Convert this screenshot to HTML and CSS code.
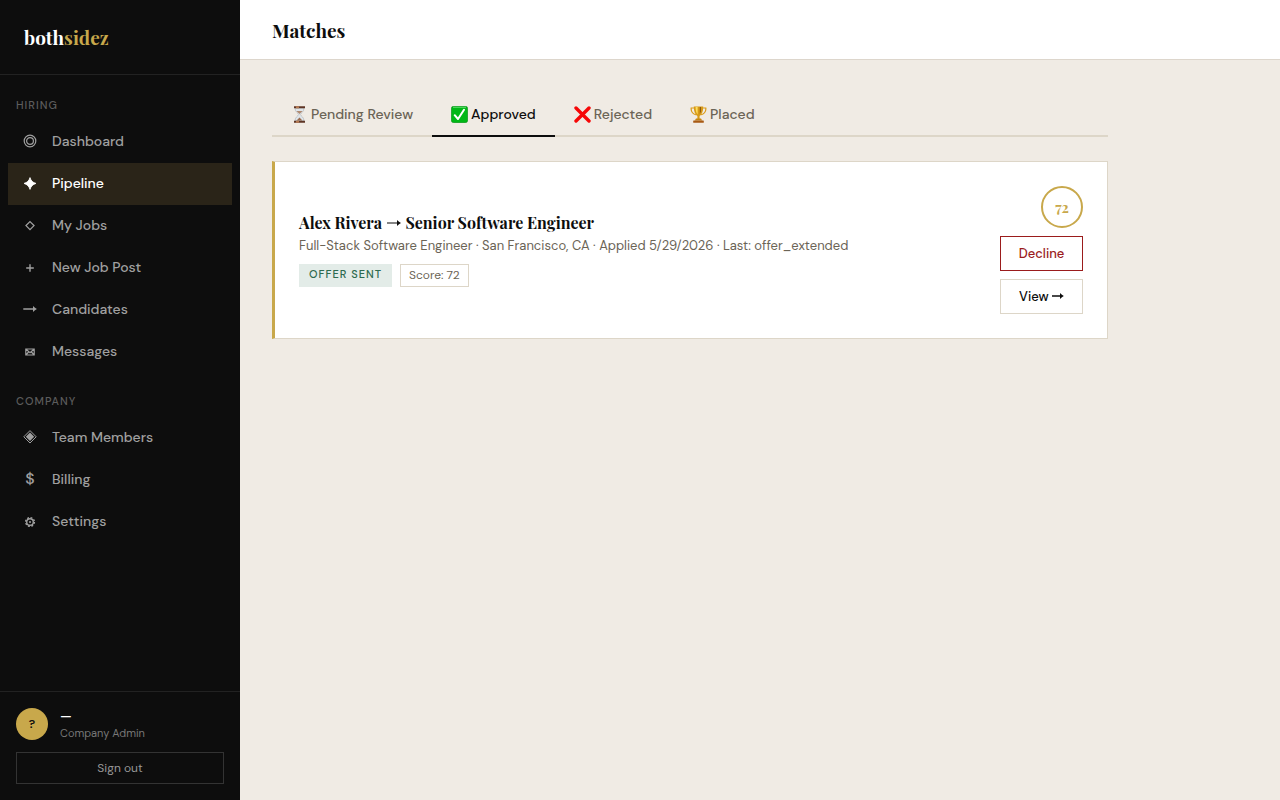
FILE: index.html
```html
<!DOCTYPE html>
<html lang="en">
<head>
    <meta charset="UTF-8" />
    <meta name="viewport" content="width=device-width, initial-scale=1.0" />
    <title>Matches - bothsidez</title>
    <link rel="stylesheet" href="styles.css">
</head>
<body>

<aside class="sidebar">
    <a href="#" class="logo">both<span>sidez</span></a>

    <nav class="nav">
        <div class="nav-section">
            <div class="nav-label">Hiring</div>
            <a href="#" class="nav-item">
                <svg class="nav-icon" viewBox="0 0 16 16" fill="none" stroke="currentColor" stroke-width="1.2"><circle cx="8" cy="8" r="5.8"/><circle cx="8" cy="8" r="3.4"/></svg>
                Dashboard
            </a>
            <a href="#" class="nav-item active">
                <svg class="nav-icon" viewBox="0 0 16 16" fill="currentColor"><path d="M8 2.6C9 5.8 10.8 7.6 14 8.4C10.8 9.4 9 11.2 8 14.4C7 11.2 5.2 9.4 2 8.4C5.2 7.6 7 5.8 8 2.6Z" stroke="currentColor" stroke-width=".8"/></svg>
                Pipeline
            </a>
            <a href="#" class="nav-item">
                <svg class="nav-icon" viewBox="0 0 16 16" fill="none" stroke="currentColor" stroke-width="1.3"><path d="M8 4.6L12 8.6L8 12.6L4 8.6Z"/></svg>
                My Jobs
            </a>
            <a href="#" class="nav-item">
                <svg class="nav-icon" viewBox="0 0 16 16" fill="none" stroke="currentColor" stroke-width="1.4"><path d="M8 5.2V12.8M4.2 9H11.8"/></svg>
                New Job Post
            </a>
            <a href="#" class="nav-item">
                <svg class="nav-icon" viewBox="0 0 16 16" fill="currentColor"><path d="M1.3 7.2H11V5Q13 7 14.9 8Q13 9 11 11V8.8H1.3Z"/></svg>
                Candidates
            </a>
            <a href="#" class="nav-item">
                <svg class="nav-icon" viewBox="0 0 16 16" fill="none" stroke="currentColor" stroke-width="1.2"><path d="M3.8 6H12.2V12H3.8ZM3.8 6L8 9.6L12.2 6M3.8 12L6.6 9M12.2 12L9.4 9"/></svg>
                Messages
            </a>
        </div>

        <div class="nav-section">
            <div class="nav-label">Company</div>
            <a href="#" class="nav-item">
                <svg class="nav-icon" viewBox="0 0 16 16" fill="currentColor"><path d="M8 1.6L14.2 7.8L8 14L1.8 7.8Z" fill="none" stroke="currentColor" stroke-width="1"/><path d="M8 3.6L12.2 7.8L8 12L3.8 7.8Z"/></svg>
                Team Members
            </a>
            <a href="#" class="nav-item">
                <span class="nav-icon">$</span>
                Billing
            </a>
            <a href="#" class="nav-item">
                <svg class="nav-icon" viewBox="0 0 16 16" fill="none" stroke="currentColor"><circle cx="8" cy="9" r="3.3" stroke-width="1.4"/><circle cx="8" cy="9" r="1" fill="currentColor" stroke="none"/><circle cx="8" cy="9" r="4.4" stroke-width="1.4" stroke-dasharray="1.9 1.556"/></svg>
                Settings
            </a>
        </div>
    </nav>

    <div class="sidebar-footer">
        <div class="user">
            <div class="avatar">?</div>
            <div>
                <div class="user-name">—</div>
                <div class="user-role">Company Admin</div>
            </div>
        </div>
        <button type="button" class="signout">Sign out</button>
    </div>
</aside>

<main class="main">
    <header class="topbar">
        <h1>Matches</h1>
    </header>

    <div class="content">
        <div class="tabs">
            <button type="button" class="tab">
                <svg class="emoji" viewBox="0 0 17 17">
                    <path d="M4 2H13C13 6 10 6.8 9.3 8.5C10 10.2 13 11 13 15H4C4 11 7 10.2 7.7 8.5C7 6.8 4 6 4 2Z" fill="#dfe4e8" stroke="#aab0b5" stroke-width=".6"/>
                    <path d="M5.6 5H11.4C11 6.2 9.3 6.8 8.5 8C7.7 6.8 6 6.2 5.6 5Z" fill="#b08a70"/>
                    <path d="M8.5 11.5L11.4 14.6H5.6Z" fill="#9a6a4c"/>
                    <path d="M3 .2H14V2.3H3ZM3 14.7H14V16.8H3Z" fill="#5e3524"/>
                    <path d="M5 .2H8V2.3H5ZM5 14.7H8V16.8H5Z" fill="#b77b52"/>
                </svg>
                Pending Review
            </button>
            <button type="button" class="tab active">
                <svg class="emoji" viewBox="0 0 17 17">
                    <rect x=".3" y=".3" width="16.4" height="16.4" rx="2.4" fill="#00b816" stroke="#078a18" stroke-width=".6"/>
                    <path d="M2 1.3H15" stroke="#6be077" stroke-width=".9"/>
                    <path d="M3.7 9.2L7 13L13 3.8" fill="none" stroke="#fff" stroke-width="2" stroke-linecap="round" stroke-linejoin="round"/>
                </svg>
                Approved
            </button>
            <button type="button" class="tab">
                <svg class="emoji" viewBox="0 0 17 17"><path d="M2 2L15 15M15 2L2 15" stroke="#f60707" stroke-width="3.4" stroke-linecap="round"/></svg>
                Rejected
            </button>
            <button type="button" class="tab">
                <svg class="emoji" viewBox="0 0 17 17">
                    <path d="M4.5 2H1.2C.8 5.5 3 8 6.5 9M12.5 2H15.8C16.2 5.5 14 8 10.5 9" fill="none" stroke="#d99a16" stroke-width="1.2"/>
                    <path d="M3.8 .5H13.2C13.2 5.5 12 8.5 9.6 10V13H7.4V10C5 8.5 3.8 5.5 3.8 .5Z" fill="#d79a18"/>
                    <path d="M5.6 1H7.6V8.5C6.2 7 5.6 4 5.6 1Z" fill="#ffdf5c"/>
                    <path d="M9.8 1H11V5.5L9.8 8Z" fill="#8f5a0c"/>
                    <path d="M6 12.6H11L12.2 14.6H4.8Z" fill="#c88710"/>
                    <rect x="3.2" y="14.4" width="10.6" height="2.4" rx=".5" fill="#a85a14"/>
                </svg>
                Placed
            </button>
        </div>

        <div class="card">
            <div class="info">
                <h2 class="card-title">
                    Alex Rivera
                    <svg class="arrow" viewBox="0 0 16 12" role="img" aria-label="to"><path d="M1 5.4H11V3Q13 5 15 6Q13 7 11 9V6.6H1Z" fill="currentColor"/></svg>
                    Senior Software Engineer
                </h2>
                <div class="meta">Full-Stack Software Engineer · San Francisco, CA · Applied 5/29/2026 · Last: offer_extended</div>
                <div class="badges">
                    <span class="badge">Offer Sent</span>
                    <span class="tag">Score: 72</span>
                </div>
            </div>
            <div class="actions">
                <div class="score">72</div>
                <button type="button" class="btn btn-danger">Decline</button>
                <button type="button" class="btn">View <svg class="arrow-sm" viewBox="0 0 12 10"><path d="M0 4.3H8V2Q10 4 11.8 5Q10 6 8 8V5.7H0Z" fill="currentColor"/></svg></button>
            </div>
        </div>
    </div>
</main>

</body>
</html>
```

FILE: styles.css
```css
* {
    box-sizing: border-box;
    margin: 0;
    padding: 0;
}
body {
    display: flex;
    min-height: 100vh;
    font-family: "DM Sans", Inter, "Open Sans", sans-serif;
    font-size: 14px;
    color: #0d0d0d;
    background: #f0ebe4;
}
button {
    font-family: inherit;
    cursor: pointer;
}

/* Sidebar */
.sidebar {
    position: sticky;
    top: 0;
    display: flex;
    flex-direction: column;
    flex-shrink: 0;
    width: 240px;
    height: 100vh;
    background: #0d0d0d;
}
.logo {
    padding: 24px;
    border-bottom: 1px solid #222;
    font-family: "Playfair Display", "Liberation Serif", serif;
    font-size: 19px;
    font-weight: 700;
    line-height: 26px;
    color: #fff;
    text-decoration: none;
}
.logo span {
    color: #c8a84b;
}
.nav {
    flex: 1;
    padding: 16px 8px;
}
.nav-section {
    margin-bottom: 14px;
}
.nav-label {
    padding: 7px 8px 9px;
    font-size: 11px;
    font-weight: 500;
    line-height: 14px;
    letter-spacing: 1px;
    text-transform: uppercase;
    color: #5c5c5c;
}
.nav-item {
    display: flex;
    align-items: center;
    gap: 12px;
    height: 42px;
    padding: 0 12px 2px;
    font-weight: 500;
    line-height: 18px;
    color: #a0a0a0;
    text-decoration: none;
}
.nav-item.active {
    color: #fff;
    background: #2a2418;
}
.nav-icon {
    width: 20px;
    height: 16px;
    line-height: 16px;
    font-size: 16px;
    text-align: center;
}
.sidebar-footer {
    padding: 16px;
    border-top: 1px solid #222;
}
.user {
    display: flex;
    align-items: center;
    gap: 12px;
    margin-bottom: 12px;
}
.avatar {
    width: 32px;
    height: 32px;
    border-radius: 50%;
    background: #c8a84b;
    color: #0d0d0d;
    font-size: 12px;
    font-weight: 600;
    line-height: 32px;
    text-align: center;
}
.user-name {
    font-size: 13px;
    font-weight: 600;
    line-height: 18px;
    color: #fff;
}
.user-role {
    font-size: 11px;
    line-height: 14px;
    color: #777;
}
.signout {
    width: 100%;
    height: 32px;
    border: 1px solid #333;
    background: none;
    font-size: 12px;
    color: #999;
}

/* Main */
.main {
    flex: 1;
    min-width: 0;
}
.topbar {
    display: flex;
    align-items: center;
    height: 60px;
    padding: 0 32px;
    border-bottom: 1px solid #ddd6cc;
    background: #fff;
}
.topbar h1 {
    font-family: "Playfair Display", "Liberation Serif", serif;
    font-size: 19px;
    font-weight: 700;
}
.content {
    max-width: 900px;
    padding: 32px;
}
.tabs {
    display: flex;
    margin-bottom: 24px;
    border-bottom: 2px solid #ddd6c8;
}
.tab {
    display: flex;
    align-items: center;
    gap: 3px;
    margin-bottom: -2px;
    padding: 13px 19px 11px;
    border: 0;
    border-bottom: 2px solid transparent;
    background: none;
    font-size: 14px;
    font-weight: 500;
    line-height: 19px;
    color: #6b6456;
}
.tab.active {
    border-bottom-color: #0d0d0d;
    color: #0d0d0d;
}
.emoji {
    width: 17px;
    height: 17px;
}

/* Match card */
.card {
    display: flex;
    align-items: center;
    justify-content: space-between;
    gap: 24px;
    padding: 24px;
    border: 1px solid #ddd6c8;
    border-left: 3px solid #c8a84b;
    background: #fff;
}
.card-title {
    margin-bottom: 4px;
    font-family: "Playfair Display", "Liberation Serif", serif;
    font-size: 16px;
    font-weight: 700;
    line-height: 19px;
}
.arrow {
    width: 16px;
    height: 12px;
}
.meta {
    margin-bottom: 8px;
    font-size: 13px;
    line-height: 20px;
    color: #6b6456;
}
.badges {
    display: flex;
    gap: 8px;
}
.badge {
    padding: 0 10px;
    background: #e3ece8;
    font-size: 11px;
    font-weight: 500;
    line-height: 21px;
    letter-spacing: 1px;
    text-transform: uppercase;
    color: #2d6a4f;
}
.tag {
    padding: 0 8px;
    border: 1px solid #ddd6c8;
    font-size: 12px;
    line-height: 21px;
    color: #6b6456;
}
.actions {
    display: flex;
    flex-direction: column;
    align-items: flex-end;
    gap: 8px;
}
.score {
    width: 42px;
    height: 42px;
    border: 2px solid #c8a84b;
    border-radius: 50%;
    font-family: "Playfair Display", "Liberation Serif", serif;
    font-size: 14px;
    font-weight: 700;
    line-height: 40px;
    text-align: center;
    color: #c8a84b;
}
.btn {
    width: 83px;
    height: 35px;
    border: 1px solid #ddd6c8;
    background: #fff;
    font-size: 13px;
    font-weight: 500;
    color: #0d0d0d;
}
.btn-danger {
    border-color: #9b1c1c;
    color: #9b1c1c;
}
.arrow-sm {
    width: 12px;
    height: 10px;
}
```
